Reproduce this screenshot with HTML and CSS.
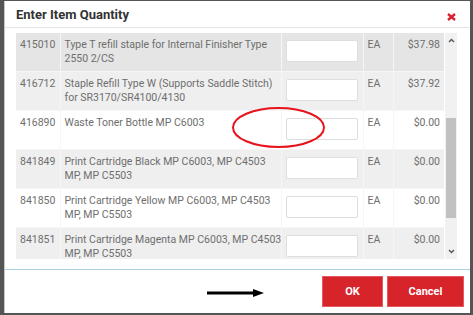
FILE: index.html
```html
<!DOCTYPE html>
<html>
<head>
<meta charset="utf-8">
<link rel="stylesheet" href="styles.css">
</head>
<body>
<div class="modal">
  <div class="header">
    <span class="title">Enter Item Quantity</span>
    <svg class="close" width="9" height="8" viewBox="0 0 9 8"><path d="M1 1 L8 7 M8 1 L1 7" stroke="#d9232e" stroke-width="2.4" stroke-linecap="butt"/></svg>
  </div>
  <div class="body">
    <div class="scroll">
      <table class="items">
        <colgroup><col class="c1"><col class="c2"><col class="c3"><col class="c4"><col class="c5"></colgroup>
        <tr class="hl"><td>415010</td><td class="desc">Type T refill staple for Internal Finisher Type<br>2550 2/CS</td><td class="qty"><span class="inp"></span></td><td>EA</td><td class="price">$37.98</td></tr>
        <tr><td>416712</td><td class="desc">Staple Refill Type W (Supports Saddle Stitch)<br>for SR3170/SR4100/4130</td><td class="qty"><span class="inp"></span></td><td>EA</td><td class="price">$37.92</td></tr>
        <tr><td>416890</td><td class="desc">Waste Toner Bottle MP C6003</td><td class="qty"><span class="inp"></span></td><td>EA</td><td class="price">$0.00</td></tr>
        <tr><td>841849</td><td class="desc">Print Cartridge Black MP C6003, MP C4503<br>MP, MP C5503</td><td class="qty"><span class="inp"></span></td><td>EA</td><td class="price">$0.00</td></tr>
        <tr><td>841850</td><td class="desc">Print Cartridge Yellow MP C6003, MP C4503<br>MP, MP C5503</td><td class="qty"><span class="inp"></span></td><td>EA</td><td class="price">$0.00</td></tr>
        <tr><td>841851</td><td class="desc">Print Cartridge Magenta MP C6003, MP C4503<br>MP, MP C5503</td><td class="qty"><span class="inp"></span></td><td>EA</td><td class="price">$0.00</td></tr>
      </table>
    </div>
    <div class="sbar">
      <svg class="sarrow" width="7" height="5" viewBox="0 0 7 5"><path d="M1 4 L3.5 1.5 L6 4" fill="none" stroke="#555" stroke-width="1.4"/></svg>
      <div class="strack"><div class="sthumb"></div></div>
      <svg class="sarrow" width="7" height="5" viewBox="0 0 7 5"><path d="M1 1 L3.5 3.5 L6 1" fill="none" stroke="#555" stroke-width="1.4"/></svg>
    </div>
  </div>
  <div class="footer">
    <button class="btn ok">OK</button>
    <button class="btn cancel">Cancel</button>
  </div>
  <svg class="ellipse" width="96" height="44" viewBox="0 0 96 44"><ellipse cx="47.5" cy="21.5" rx="45.5" ry="19.5" fill="none" stroke="#e8141b" stroke-width="2"/></svg>
  <svg class="arrow" width="58" height="10" viewBox="0 0 58 10"><path d="M0 5 H48" stroke="#000" stroke-width="3"/><path d="M46 1 L57 5 L46 9 Z" fill="#000"/></svg>
</div>
</body>
</html>
```

FILE: styles.css
```css
html, body {
  margin: 0;
  padding: 0;
}
body {
  background: #555;
  width: 473px;
  height: 315px;
  overflow: hidden;
  font-family: Roboto, "Liberation Sans", sans-serif;
}
.modal {
  position: relative;
  margin: 1px 3px 0 4px;
  height: 312px;
  background: #fff;
  border-left: 1px solid #c8c8c8;
  box-sizing: border-box;
  display: flex;
  flex-direction: column;
}
.header {
  height: 26px;
  border-bottom: 1px solid #e6e6e6;
  display: flex;
  align-items: center;
  justify-content: space-between;
  padding: 0 14px 0 11px;
  flex: none;
}
.title {
  font-size: 13px;
  font-weight: 700;
  color: #333;
  margin-top: 1px;
}
.close {
  display: block;
  margin-top: 5px;
}
.body {
  display: flex;
  padding: 5px 0 0 11px;
  height: 226px;
  flex: none;
}
.scroll {
  width: 428px;
  height: 226px;
  overflow: hidden;
}
.items {
  width: 428px;
  border-collapse: collapse;
  table-layout: fixed;
  font-size: 10.5px;
  line-height: 14px;
  color: #6e6e6e;
}
.c1 { width: 44px; }
.c2 { width: 221px; }
.c3 { width: 82px; }
.c4 { width: 30px; }
.c5 { width: 51px; }
.items td {
  border: 1px solid #f6f6f6;
  padding: 5px 4px 0 4px;
  vertical-align: top;
  white-space: nowrap;
  overflow: hidden;
}
.items td.desc { padding-right: 2px; }
.items tr:first-child td { border-top: none; }
.items td:first-child { border-left: none; }
.items td:last-child { border-right: none; }
.items tr:nth-child(even) { background: #efefef; }
.items tr.hl { background: #e5e5e5; }
.items td.qty {
  padding: 7px 4px 9px 4px;
}
.items td.price { text-align: right; }
.inp {
  display: block;
  width: 72px;
  height: 22px;
  box-sizing: border-box;
  background: #fff;
  border: 1px solid #dedede;
  border-radius: 2px;
}
.sbar {
  width: 12px;
  margin-left: 1px;
  background: #f1f1f1;
  display: flex;
  flex-direction: column;
  align-items: center;
}
.sarrow {
  display: block;
  flex: none;
  margin: 5px 0;
}
.strack {
  flex: 1;
  width: 100%;
  position: relative;
}
.sthumb {
  margin-top: 70px;
  height: 100px;
  width: 10px;
  margin-left: 1px;
  background: #c1c1c1;
}
.footer {
  margin-top: 10px;
  border-top: 1px solid #a9cfe0;
  display: flex;
  justify-content: flex-end;
  gap: 4px;
  padding: 6px 6px 0 0;
}
.btn {
  height: 31px;
  border: 1px solid #e35a60;
  background: #d7242b;
  color: #fff;
  font-family: Roboto, "Liberation Sans", sans-serif;
  font-size: 11px;
  font-weight: 700;
  padding: 0;
}
.ok { width: 61px; }
.cancel { width: 77px; }
.ellipse {
  position: absolute;
  left: 226px;
  top: 105px;
}
.arrow {
  position: absolute;
  left: 202px;
  top: 287px;
}
```
